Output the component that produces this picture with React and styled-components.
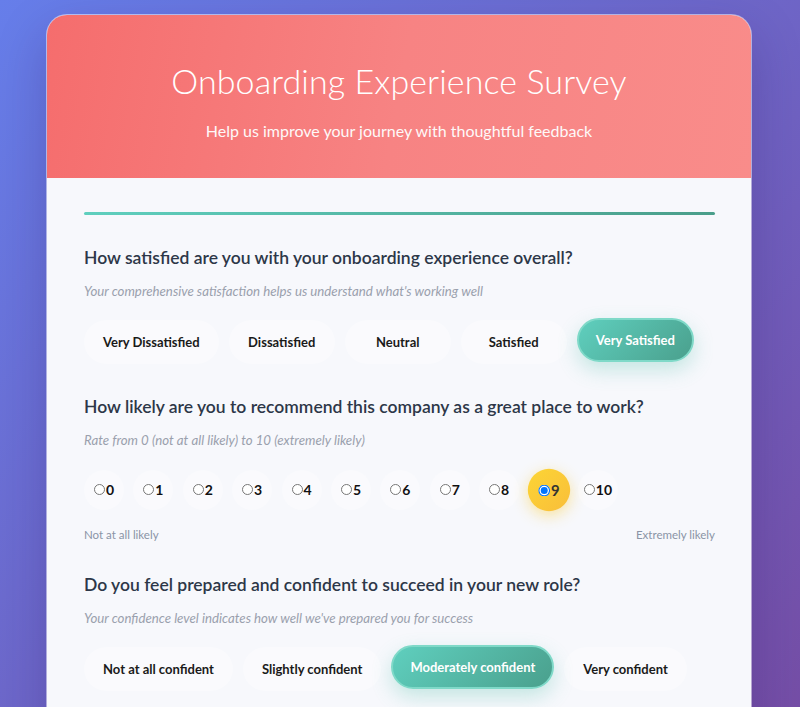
import { useState } from "react";
import styled, { createGlobalStyle } from "styled-components";

const GlobalStyle = createGlobalStyle`
    * {
        box-sizing: border-box;
    }
    body {
        margin: 0;
        font-family: "Lato", "Noto Sans", sans-serif;
        background: linear-gradient(135deg, #667eea 0%, #764ba2 100%);
        min-height: 100vh;
    }
`;

const satisfaction = [
    "Very Dissatisfied",
    "Dissatisfied",
    "Neutral",
    "Satisfied",
    "Very Satisfied",
];

const confidence = [
    "Not at all confident",
    "Slightly confident",
    "Moderately confident",
    "Very confident",
];

function ChoiceRow({ options, value, onChange }) {
    return (
        <Choices>
            {options.map((opt) => (
                <Choice
                    key={opt}
                    type="button"
                    $active={value === opt}
                    onClick={() => onChange(opt)}
                >
                    {opt}
                </Choice>
            ))}
        </Choices>
    );
}

export default function App() {
    const [overall, setOverall] = useState("Very Satisfied");
    const [score, setScore] = useState(9);
    const [ready, setReady] = useState("Moderately confident");

    return (
        <Page>
            <GlobalStyle />
            <Card>
                <Header>
                    <h1>Onboarding Experience Survey</h1>
                    <p>Help us improve your journey with thoughtful feedback</p>
                </Header>
                <Body>
                    <Progress />

                    <Question>
                        <h2>How satisfied are you with your onboarding experience overall?</h2>
                        <Hint>Your comprehensive satisfaction helps us understand what's working well</Hint>
                        <ChoiceRow options={satisfaction} value={overall} onChange={setOverall} />
                    </Question>

                    <Question>
                        <h2>How likely are you to recommend this company as a great place to work?</h2>
                        <Hint>Rate from 0 (not at all likely) to 10 (extremely likely)</Hint>
                        <Scale>
                            {Array.from({ length: 11 }, (_, n) => (
                                <ScaleItem key={n} $active={score === n}>
                                    <input
                                        type="radio"
                                        name="nps"
                                        checked={score === n}
                                        onChange={() => setScore(n)}
                                    />
                                    {n}
                                </ScaleItem>
                            ))}
                        </Scale>
                        <ScaleLabels>
                            <span>Not at all likely</span>
                            <span>Extremely likely</span>
                        </ScaleLabels>
                    </Question>

                    <Question>
                        <h2>Do you feel prepared and confident to succeed in your new role?</h2>
                        <Hint>Your confidence level indicates how well we've prepared you for success</Hint>
                        <ChoiceRow options={confidence} value={ready} onChange={setReady} />
                    </Question>
                </Body>
            </Card>
        </Page>
    );
}

const Page = styled.div`
    padding: 15px 49px 40px 47px;
`;

const Card = styled.div`
    background: #f7f8fc;
    border-radius: 20px;
    overflow: hidden;
    box-shadow: 0 0 0 1px rgba(255, 255, 255, 0.5), 0 20px 50px rgba(40, 20, 90, 0.25);
`;

const Header = styled.header`
    height: 163px;
    padding-top: 44px;
    text-align: center;
    color: #fff;
    background: linear-gradient(100deg, #f56d6d 0%, #f78383 50%, #f98c8a 100%);
    h1 {
        margin: 0;
        font-size: 34px;
        font-weight: 300;
        line-height: 44px;
        letter-spacing: 0.1px;
    }
    p {
        margin: 18px 0 0;
        font-size: 16px;
        line-height: 20px;
        opacity: 0.95;
    }
`;

const Body = styled.div`
    padding: 34px 36px 40px 37px;
`;

const Progress = styled.div`
    height: 3px;
    border-radius: 2px;
    background: linear-gradient(90deg, #5fcfbe 0%, #4a9e8a 100%);
    margin-bottom: 31.5px;
`;

const Question = styled.section`
    margin-bottom: 32px;
    h2 {
        margin: 0;
        font-size: 17.5px;
        font-weight: 600;
        line-height: 22px;
        color: #2d3748;
    }
`;

const Hint = styled.p`
    margin: 14px 0 20px;
    font-size: 13.25px;
    font-style: italic;
    line-height: 17px;
    color: #9aa0ad;
`;

const Choices = styled.div`
    display: flex;
    gap: 10px;
    align-items: center;
`;

const Choice = styled.button`
    min-width: 106px;
    padding: 11px 17px;
    border-radius: 24px;
    border: 2px solid ${(p) => (p.$active ? "#7fd9c8" : "transparent")};
    font-family: inherit;
    font-size: 13px;
    font-weight: 700;
    line-height: 18px;
    cursor: pointer;
    color: ${(p) => (p.$active ? "#fff" : "#1a1a1a")};
    background: ${(p) =>
        p.$active
            ? "linear-gradient(135deg, #5fcfbe 0%, #4aa08d 100%)"
            : "rgba(255, 255, 255, 0.35)"};
    box-shadow: ${(p) =>
        p.$active ? "0 8px 20px rgba(78, 190, 168, 0.3)" : "none"};
    transform: ${(p) => (p.$active ? "translateY(-2px)" : "none")};
`;

const Scale = styled.div`
    display: flex;
    gap: 9.4px;
    align-items: center;
    margin-top: 21px;
`;

const ScaleItem = styled.label`
    width: 40px;
    height: 40px;
    border-radius: 50%;
    display: flex;
    align-items: center;
    justify-content: center;
    font-size: 14px;
    font-weight: 700;
    color: ${(p) => (p.$active ? "#333" : "#111")};
    background: ${(p) =>
        p.$active
            ? "linear-gradient(135deg, #fcd535 0%, #f9be3a 100%)"
            : "rgba(255, 255, 255, 0.35)"};
    box-shadow: ${(p) =>
        p.$active ? "0 4px 14px rgba(250, 200, 40, 0.45)" : "none"};
    transform: ${(p) => (p.$active ? "scale(1.06)" : "none")};
    cursor: pointer;
    input {
        width: 11px;
        height: 11px;
        margin: 0 1px 0 0;
    }
`;

const ScaleLabels = styled.div`
    display: flex;
    justify-content: space-between;
    margin-top: 18px;
    font-size: 11.5px;
    line-height: 14px;
    color: #8a94a6;
    margin-bottom: 2px;
`;
